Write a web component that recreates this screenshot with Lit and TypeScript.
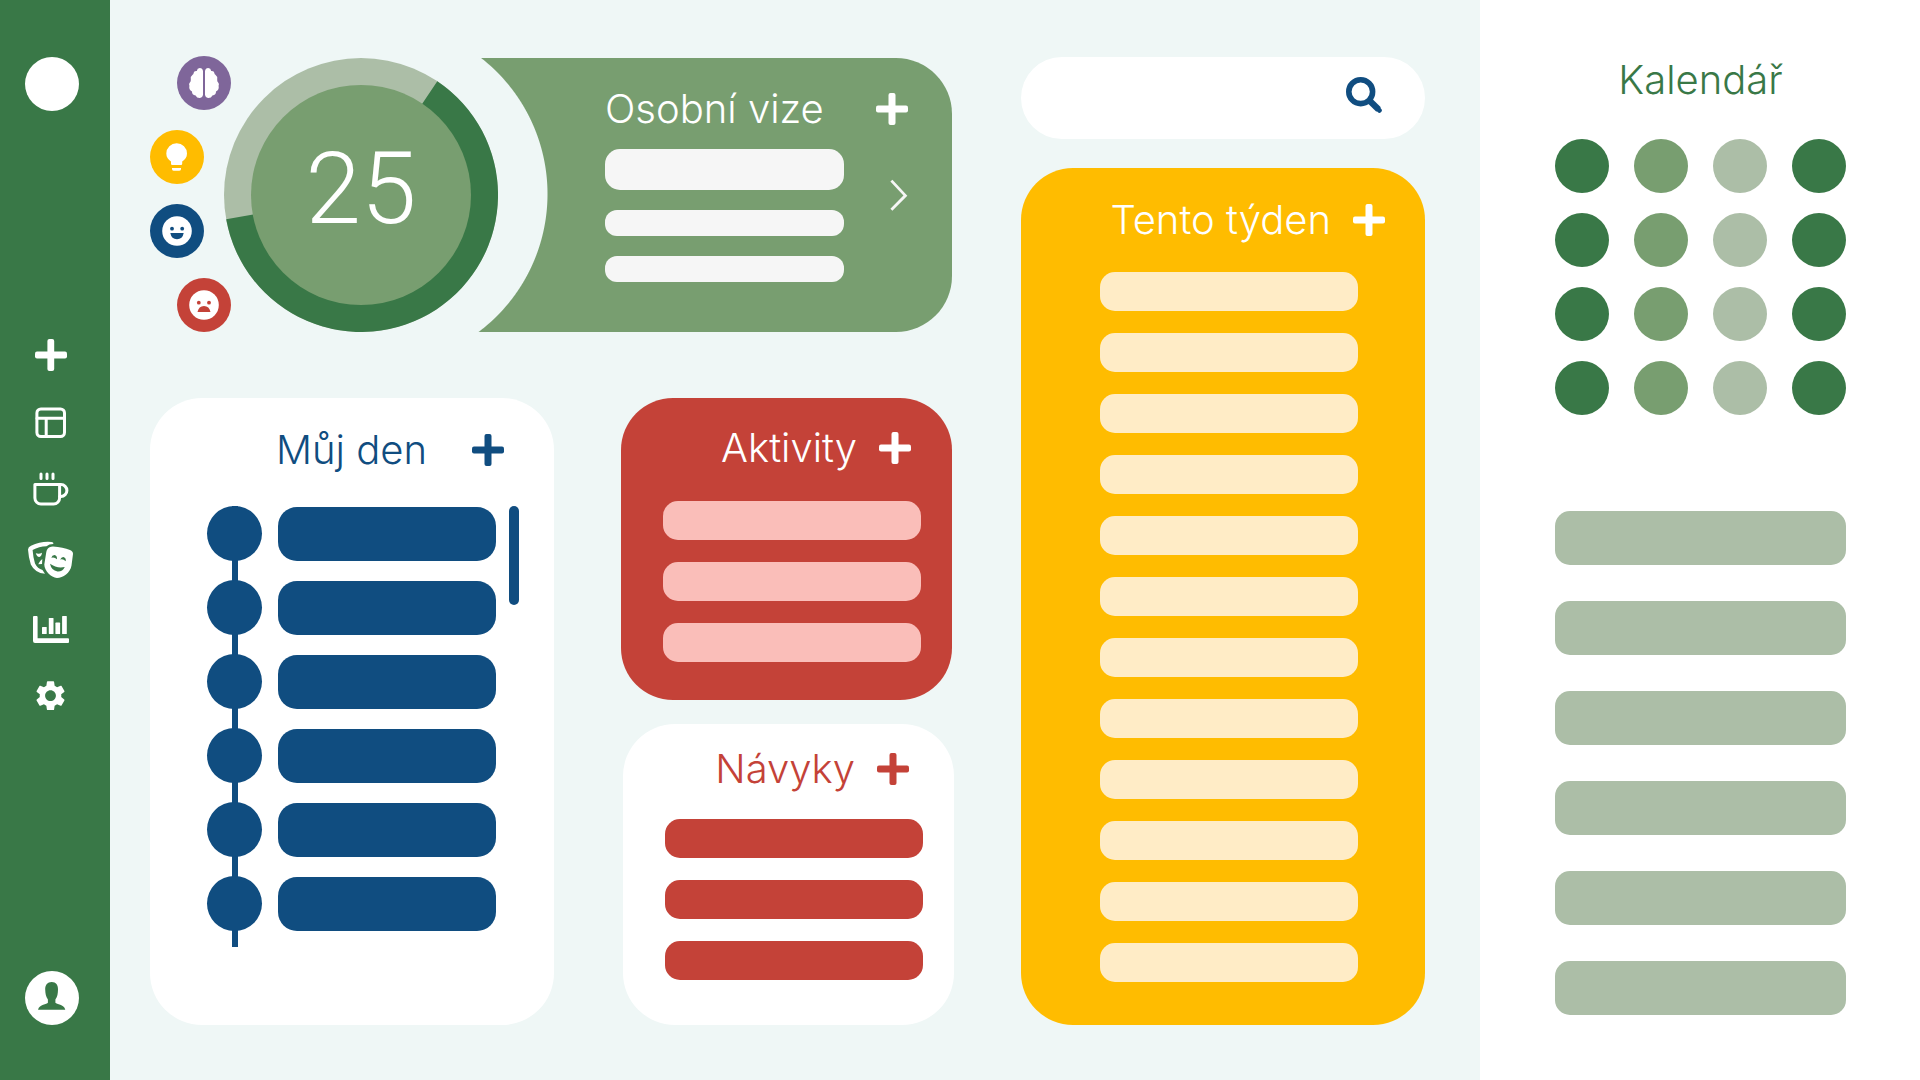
import { LitElement, html, css, svg } from "lit";
import type { TemplateResult } from "lit";
import { customElement, property } from "lit/decorators.js";

const range = (n: number) => Array.from({ length: n }, (_, i) => i);

/** Plus button that sits at the end of a card's heading row. */
@customElement("add-button")
class AddButton extends LitElement {
  static styles = css`
    :host {
      display: block;
      flex: none;
    }
    .button {
      display: block;
      padding: 0;
      border: 0;
      background: none;
      color: inherit;
      cursor: pointer;
    }
    .icon {
      display: block;
      width: 32px;
      height: 32px;
      fill: currentColor;
    }
  `;

  @property() label = "";

  render() {
    return html`<button class="button" type="button" aria-label=${this.label}>
      <svg class="icon" viewBox="0 0 32 32" aria-hidden="true">
        <rect x="0" y="12.5" width="32" height="7" rx="2" />
        <rect x="12.5" y="0" width="7" height="32" rx="2" />
      </svg>
    </button>`;
  }
}

interface NavItem {
  label: string;
  top: number;
  icon: TemplateResult;
}

const navItems: NavItem[] = [
  {
    label: "Přidat",
    top: 321,
    icon: svg`<rect x="35" y="351.6" width="32" height="6.8" rx="2" /><rect x="47.4" y="339" width="6.8" height="32" rx="2" />`,
  },
  {
    label: "Přehled",
    top: 389,
    icon: svg`<g class="line"><rect x="36.9" y="408.9" width="27.6" height="27.6" rx="4" /><path d="M37 418.2H64.4M46.2 418.2V436.4" /></g>`,
  },
  {
    label: "Odpočinek",
    top: 457,
    icon: svg`<g class="line"><path d="M34.9 484.6H59.6V498a6 6 0 0 1-6 6H40.9a6 6 0 0 1-6-6Z" /><path d="M59.6 484.6H61a5.8 5.8 0 0 1 0 11.8H59.6" /><path d="M41 474V478.4M47 474V478.4M53 474V478.4" /></g>`,
  },
  {
    label: "Aktivity",
    top: 525,
    icon: svg`<path d="M28 549.5Q28.2 547 31 545.8Q41 541 51.5 542Q54 542.4 53.2 544Q49 544 46.5 546.3Q39 546.5 32.6 550Q33.2 558 35 563.5Q37.5 568.5 42.5 570Q43.8 572 45 573.8Q35 573 30.8 564.5Q28.5 557 28 549.5Z" />
      <path d="M35.8 553.3Q39 554.5 42 552.8Q41.5 556.8 39.3 557Q36.8 557 35.8 553.3Z" />
      <path d="M42.3 559L42 564L38.2 564.2Q39.5 561 42.3 559Z" />
      <path d="M47.5 549Q49 546.5 53 546.5Q63 547 70 550Q73.2 551.5 73 554L71.5 565.5C70.3 573 63 578 57 578C51 577.5 44.5 571 44.3 564.5L46.3 552Q46.5 550.4 47.5 549Z" />
      <g class="cut"><path d="M51.3 557.8Q52 555 54.5 555Q57.2 555.5 57 559.2Q54 556.5 51.3 557.8Z" /><path d="M60.2 559.6Q61.5 556.6 64 557.2Q66.4 558.2 65.6 561.2Q63 558.5 60.2 559.6Z" /><path d="M50 563.8Q57 568.8 64.8 567Q62.5 571.8 57.5 571.5Q51.3 570.5 50 563.8Z" /></g>`,
  },
  {
    label: "Statistiky",
    top: 593,
    icon: svg`<path d="M34 616h2.6a1 1 0 0 1 1 1v21.3H68a1 1 0 0 1 1 1V642a1 1 0 0 1-1 1H35a2 2 0 0 1-2-2V617a1 1 0 0 1 1-1Z" />
      <rect x="42" y="627" width="4.7" height="7" rx=".6" /><rect x="48.8" y="618" width="4.7" height="16" rx=".6" /><rect x="55.4" y="622.6" width="4.7" height="11.4" rx=".6" /><rect x="62.1" y="616" width="4.7" height="18" rx=".6" />`,
  },
  {
    label: "Nastavení",
    top: 661,
    icon: svg`<path transform="translate(32.5 677.7) scale(1.5)" d="M19.14 12.94c.04-.3.06-.61.06-.94 0-.32-.02-.64-.07-.94l2.03-1.58c.18-.14.23-.41.12-.61l-1.92-3.32c-.12-.22-.37-.29-.59-.22l-2.39.96c-.5-.38-1.03-.7-1.62-.94l-.36-2.54c-.04-.24-.24-.41-.48-.41h-3.84c-.24 0-.43.17-.47.41l-.36 2.54c-.59.24-1.13.57-1.62.94l-2.39-.96c-.22-.08-.47 0-.59.22L2.74 8.87c-.12.21-.08.47.12.61l2.03 1.58c-.05.3-.09.63-.09.94s.02.64.07.94l-2.03 1.58c-.18.14-.23.41-.12.61l1.92 3.32c.12.22.37.29.59.22l2.39-.96c.5.38 1.03.7 1.62.94l.36 2.54c.05.24.24.41.48.41h3.84c.24 0 .44-.17.47-.41l.36-2.54c.59-.24 1.13-.56 1.62-.94l2.39.96c.22.08.47 0 .59-.22l1.92-3.32c.12-.22.07-.47-.12-.61l-2.01-1.58zM12 15.6c-1.98 0-3.6-1.62-3.6-3.6s1.62-3.6 3.6-3.6 3.6 1.62 3.6 3.6-1.62 3.6-3.6 3.6z" />`,
  },
];

/** Left bar: logo, navigation and user profile. */
@customElement("side-bar")
class SideBar extends LitElement {
  static styles = css`
    :host {
      display: flex;
      flex: none;
      flex-direction: column;
      box-sizing: border-box;
      width: 110px;
      padding: 57px 31px 55px 25px;
      background: #397847;
    }
    .round {
      display: block;
      width: 54px;
      height: 54px;
      padding: 0;
      border: 0;
      border-radius: 50%;
      background: #fff;
      cursor: pointer;
    }
    .profile {
      margin-top: auto;
    }
    .nav {
      display: flex;
      flex-direction: column;
      margin-top: 210px;
    }
    .item {
      display: block;
      padding: 0;
      border: 0;
      background: none;
      cursor: pointer;
    }
    .icon {
      display: block;
      width: 54px;
      height: 68px;
      fill: #fff;
    }
    .person {
      display: block;
      width: 54px;
      height: 54px;
    }
    .line {
      fill: none;
      stroke: #fff;
      stroke-width: 3;
      stroke-linecap: round;
      stroke-linejoin: round;
    }
    .cut,
    .person {
      fill: #397847;
    }
  `;

  render() {
    return html`
      <a class="round" href="#" aria-label="Domů"></a>
      <nav class="nav">
        ${navItems.map(
          (item) => html`<button class="item" type="button" aria-label=${item.label}>
            <svg class="icon" viewBox="25 ${item.top} 54 68" aria-hidden="true">${item.icon}</svg>
          </button>`,
        )}
      </nav>
      <button class="round profile" type="button" aria-label="Profil">
        <svg class="person" viewBox="0 0 54 54" aria-hidden="true">
          <path
            d="M26.7 11C31 11 33.2 14 33 18.5C32.8 23 32.6 25.5 30.4 28.5V31.8C31.5 33.6 39 33 40.3 38.7H13C14.5 33 22 33.6 22.9 31.8V28.5C20.8 25.5 20.4 23 20.2 18.5C20 14 22.5 11 26.7 11Z"
          />
        </svg>
      </button>
    `;
  }
}

interface Mood {
  name: string;
  label: string;
  icon: TemplateResult;
}

const halfBrain =
  "M26 15Q25.5 12 22.8 12Q20.2 12.2 19.8 15Q17 14.6 16.6 17Q16.8 18 15.6 18.8Q13.2 20.5 13.8 23.5Q14 25.6 13 26.2Q11.4 28 12.4 29.8Q11.6 34 15 35.6Q14.8 39.2 18.6 39.4Q19.8 42.2 23 42Q25.6 41.6 26 39Z";

const moods: Mood[] = [
  {
    name: "mind",
    label: "Mysl",
    icon: svg`<path d=${halfBrain} /><path transform="translate(54 0) scale(-1 1)" d=${halfBrain} />`,
  },
  {
    name: "idea",
    label: "Nápady",
    icon: svg`<path d="M26.7 13.3A10.3 10.3 0 0 0 16.3 23.6C16.3 27.5 18.4 29.8 21 31.5V33.8Q21 35 22.2 35H31Q32.2 35 32.2 33.8V31.5C34.9 29.8 37 27.5 37 23.6A10.3 10.3 0 0 0 26.7 13.3Z" /><path d="M22 38H31V39Q31 40.7 29.4 40.7H23.6Q22 40.7 22 39Z" />`,
  },
  {
    name: "happy",
    label: "Radost",
    icon: svg`<circle cx="27" cy="27" r="14.8" /><g class="face"><circle cx="22" cy="24.7" r="1.9" /><circle cx="32.2" cy="24.7" r="1.9" /><path d="M20.3 29H33.7Q32.5 35.2 27 35.2Q21.5 35.2 20.3 29Z" /></g>`,
  },
  {
    name: "sad",
    label: "Smutek",
    icon: svg`<circle cx="27" cy="27" r="14.8" /><g class="face"><circle cx="21.8" cy="24.7" r="1.9" /><circle cx="32" cy="24.7" r="1.9" /><path d="M20.5 34H33.5Q32.3 28 27 28Q21.7 28 20.5 34Z" /></g>`,
  },
];

@customElement("app-root")
class AppRoot extends LitElement {
  static styles = css`
    :host {
      --green: #397847;
      --sage: #789e70;
      --mist: #acbea7;
      --blue: #104d80;
      --red: #c44238;
      --yellow: #ffbc00;
      display: flex;
      min-height: 100vh;
      background: #eff7f6;
      font-family: Inter, "Liberation Sans", sans-serif;
      font-weight: 300;
    }
    .main {
      display: grid;
      flex: 1;
      grid-template-columns: minmax(0, 802fr) minmax(0, 404fr);
      column-gap: 69px;
      min-width: 0;
      padding: 56px 55px 55px 40px;
    }
    .left,
    .right {
      display: flex;
      flex-direction: column;
    }
    .left {
      gap: 66px;
    }
    .right {
      gap: 29px;
      padding-top: 1px;
    }
    .title {
      margin: 0;
      font-size: 40px;
      font-weight: 300;
      line-height: 40px;
      white-space: nowrap;
    }
    .head {
      display: flex;
      align-items: center;
      justify-content: flex-end;
      gap: 22px;
    }
    .list {
      display: flex;
      flex-direction: column;
      gap: 22px;
      margin: 0;
      padding: 0;
      list-style: none;
    }
    .bar {
      height: 39px;
      border-radius: 15px;
      background: var(--bar);
    }

    .hero {
      display: flex;
      align-items: flex-end;
    }
    .moods {
      display: flex;
      flex-direction: column;
      gap: 20px;
      width: 81px;
    }
    .mood {
      width: 54px;
      height: 54px;
      padding: 0;
      border: 0;
      border-radius: 50%;
      background: var(--tone);
      cursor: pointer;
    }
    .mood-icon {
      display: block;
      width: 54px;
      height: 54px;
      fill: #fff;
    }
    .face {
      fill: var(--tone);
    }
    .mind {
      --tone: #7f669a;
      align-self: flex-end;
    }
    .idea {
      --tone: var(--yellow);
    }
    .happy {
      --tone: var(--blue);
    }
    .sad {
      --tone: var(--red);
      align-self: flex-end;
    }
    .score {
      display: grid;
      flex: none;
      place-items: center;
      width: 274px;
      margin-left: -7px;
    }
    .ring,
    .value {
      grid-area: 1 / 1;
    }
    .ring {
      display: block;
      width: 274px;
      height: 274px;
    }
    .value {
      padding-bottom: 12px;
      color: #fff;
      font-family: Roboto, "Liberation Sans", sans-serif;
      font-size: 100px;
      line-height: 100px;
    }
    .track {
      fill: var(--mist);
    }
    .done {
      fill: var(--green);
    }
    .core {
      fill: var(--sage);
    }
    .vision {
      display: flex;
      flex: 1;
      flex-direction: column;
      gap: 20px;
      box-sizing: border-box;
      height: 274px;
      margin-left: -21px;
      padding: 31px 44px 0 128px;
      border-radius: 0 56px 56px 0;
      background: radial-gradient(
        circle at -102px 136px,
        transparent 172px,
        var(--sage) 173px
      );
      color: #fff;
    }
    .spread {
      justify-content: space-between;
    }
    .vision-body {
      display: flex;
      justify-content: space-between;
      gap: 32px;
    }
    .lines {
      --bar: #f6f6f6;
      flex: 1;
      gap: 20px;
    }
    .line {
      height: 26px;
      border-radius: 12px;
      background: var(--bar);
    }
    .line:first-child {
      height: 41px;
      border-radius: 15px;
    }
    .next {
      align-self: flex-start;
      margin-top: 30px;
      padding: 0;
      border: 0;
      background: none;
      cursor: pointer;
    }
    .chevron {
      display: block;
      width: 32px;
      height: 32px;
      fill: none;
      stroke: #f6f6f6;
      stroke-width: 2.8;
    }

    .lower {
      display: grid;
      flex: 1;
      grid-template-columns: minmax(0, 404fr) minmax(0, 331fr);
      column-gap: 67px;
    }
    .stack {
      display: flex;
      flex-direction: column;
      gap: 24px;
    }
    .card {
      display: flex;
      flex-direction: column;
      border-radius: 52px;
    }
    .day {
      gap: 36px;
      padding: 32px 35px 0 57px;
      background: #fff;
      color: var(--blue);
    }
    .day .head {
      padding: 0 15px 0 69px;
    }
    .agenda {
      display: flex;
      gap: 13px;
    }
    .timeline {
      flex: 1;
      gap: 19px;
      padding-bottom: 16px;
      background: linear-gradient(var(--blue), var(--blue)) 25px 0 / 6px 100%
        no-repeat;
    }
    .entry {
      display: flex;
      align-items: flex-end;
      gap: 16px;
    }
    .point {
      width: 55px;
      height: 55px;
      border-radius: 50%;
      background: var(--blue);
    }
    .slot {
      flex: 1;
      height: 54px;
      border-radius: 19px;
      background: var(--blue);
    }
    .thumb {
      width: 10px;
      height: 99px;
      border-radius: 5px;
      background: var(--blue);
    }
    .activities {
      --bar: #fabeb9;
      gap: 33px;
      padding: 30px 31px 38px 42px;
      background: var(--red);
      color: #fff;
    }
    .activities .head {
      padding-right: 10px;
    }
    .habits {
      --bar: var(--red);
      flex: 1;
      gap: 30px;
      margin: 0 -2px 0 2px;
      padding: 25px 31px 38px 42px;
      background: #fff;
      color: var(--red);
    }
    .habits .head {
      padding-right: 14px;
    }

    .search {
      display: flex;
      align-items: flex-start;
      box-sizing: border-box;
      height: 82px;
      padding: 20px 43px 0 41px;
      border-radius: 41px;
      background: #fff;
    }
    .query {
      flex: 1;
      min-width: 0;
      height: 40px;
      padding: 0;
      border: 0;
      outline: 0;
      background: none;
      color: var(--blue);
      font: inherit;
      font-size: 24px;
    }
    .find {
      padding: 0;
      border: 0;
      background: none;
      cursor: pointer;
    }
    .lens {
      display: block;
      width: 36px;
      height: 36px;
      fill: none;
      stroke: var(--blue);
    }
    .week {
      --bar: #ffecc6;
      flex: 1;
      gap: 32px;
      padding: 32px 67px 0 79px;
      background: var(--yellow);
      color: #fff;
    }
    .week .head {
      margin-right: -27px;
    }

    .calendar {
      flex: none;
      box-sizing: border-box;
      width: 440px;
      padding: 60px 74px 0 75px;
      background: #fff;
      color: var(--green);
      text-align: center;
    }
    .days {
      display: grid;
      grid-template-columns: repeat(4, 54px);
      justify-content: space-between;
      row-gap: 20px;
      margin: 39px 0 96px;
      padding: 0;
      list-style: none;
    }
    .date {
      height: 54px;
      border-radius: 50%;
      background: var(--green);
    }
    .date:nth-child(4n + 2) {
      background: var(--sage);
    }
    .date:nth-child(4n + 3) {
      background: var(--mist);
    }
    .events {
      gap: 36px;
    }
    .event {
      height: 54px;
      border-radius: 15px;
      background: var(--mist);
    }
  `;

  private items(count: number, name: string) {
    return range(count).map(() => html`<li class=${name}></li>`);
  }

  private head(title: string, spread = false) {
    return html`<header class=${spread ? "head spread" : "head"}>
      <h2 class="title">${title}</h2>
      <add-button label="Přidat: ${title}"></add-button>
    </header>`;
  }

  private hero() {
    return html`<section class="hero">
      <div class="moods">
        ${moods.map(
          (mood) => html`<button class="mood ${mood.name}" type="button" aria-label=${mood.label}>
            <svg class="mood-icon" viewBox="0 0 54 54" aria-hidden="true">${mood.icon}</svg>
          </button>`,
        )}
      </div>
      <div class="score">
        <svg class="ring" viewBox="0 0 274 274" aria-hidden="true">
          <circle class="track" cx="137" cy="137" r="137" />
          <path class="done" d="M137 137L213.3 23.2A137 137 0 1 1 2.2 161.3Z" />
          <circle class="core" cx="137" cy="137" r="110" />
        </svg>
        <span class="value">25</span>
      </div>
      <div class="vision">
        ${this.head("Osobní vize", true)}
        <div class="vision-body">
          <ul class="list lines">
            ${this.items(3, "line")}
          </ul>
          <button class="next" type="button" aria-label="Další">
            <svg class="chevron" viewBox="0 0 32 32" aria-hidden="true">
              <path d="M15.4 1.6L29.4 16.6L15.4 30.8" />
            </svg>
          </button>
        </div>
      </div>
    </section>`;
  }

  render() {
    return html`
      <side-bar></side-bar>
      <main class="main">
        <div class="left">
          ${this.hero()}
          <div class="lower">
            <section class="card day">
              ${this.head("Můj den", true)}
              <div class="agenda">
                <ol class="list timeline">
                  ${range(6).map(
                    () => html`<li class="entry">
                      <span class="point"></span><span class="slot"></span>
                    </li>`,
                  )}
                </ol>
                <div class="thumb"></div>
              </div>
            </section>
            <div class="stack">
              <section class="card activities">
                ${this.head("Aktivity")}
                <ul class="list">
                  ${this.items(3, "bar")}
                </ul>
              </section>
              <section class="card habits">
                ${this.head("Návyky")}
                <ul class="list">
                  ${this.items(3, "bar")}
                </ul>
              </section>
            </div>
          </div>
        </div>
        <div class="right">
          <form class="search" role="search">
            <input class="query" type="search" aria-label="Hledat" />
            <button class="find" type="button" aria-label="Hledat">
              <svg class="lens" viewBox="0 0 36 36" aria-hidden="true">
                <circle cx="14.7" cy="14.7" r="11.9" stroke-width="5.6" />
                <path d="M23.4 23.4L32.6 32.6" stroke-width="6.4" />
                <path d="M32.8 32.8L33.4 33.4" stroke-width="4.8" stroke-linecap="round" />
              </svg>
            </button>
          </form>
          <section class="card week">
            ${this.head("Tento týden")}
            <ul class="list">
              ${this.items(12, "bar")}
            </ul>
          </section>
        </div>
      </main>
      <aside class="calendar">
        <h2 class="title">Kalendář</h2>
        <ul class="days">
          ${this.items(16, "date")}
        </ul>
        <ul class="list events">
          ${this.items(6, "event")}
        </ul>
      </aside>
    `;
  }
}
